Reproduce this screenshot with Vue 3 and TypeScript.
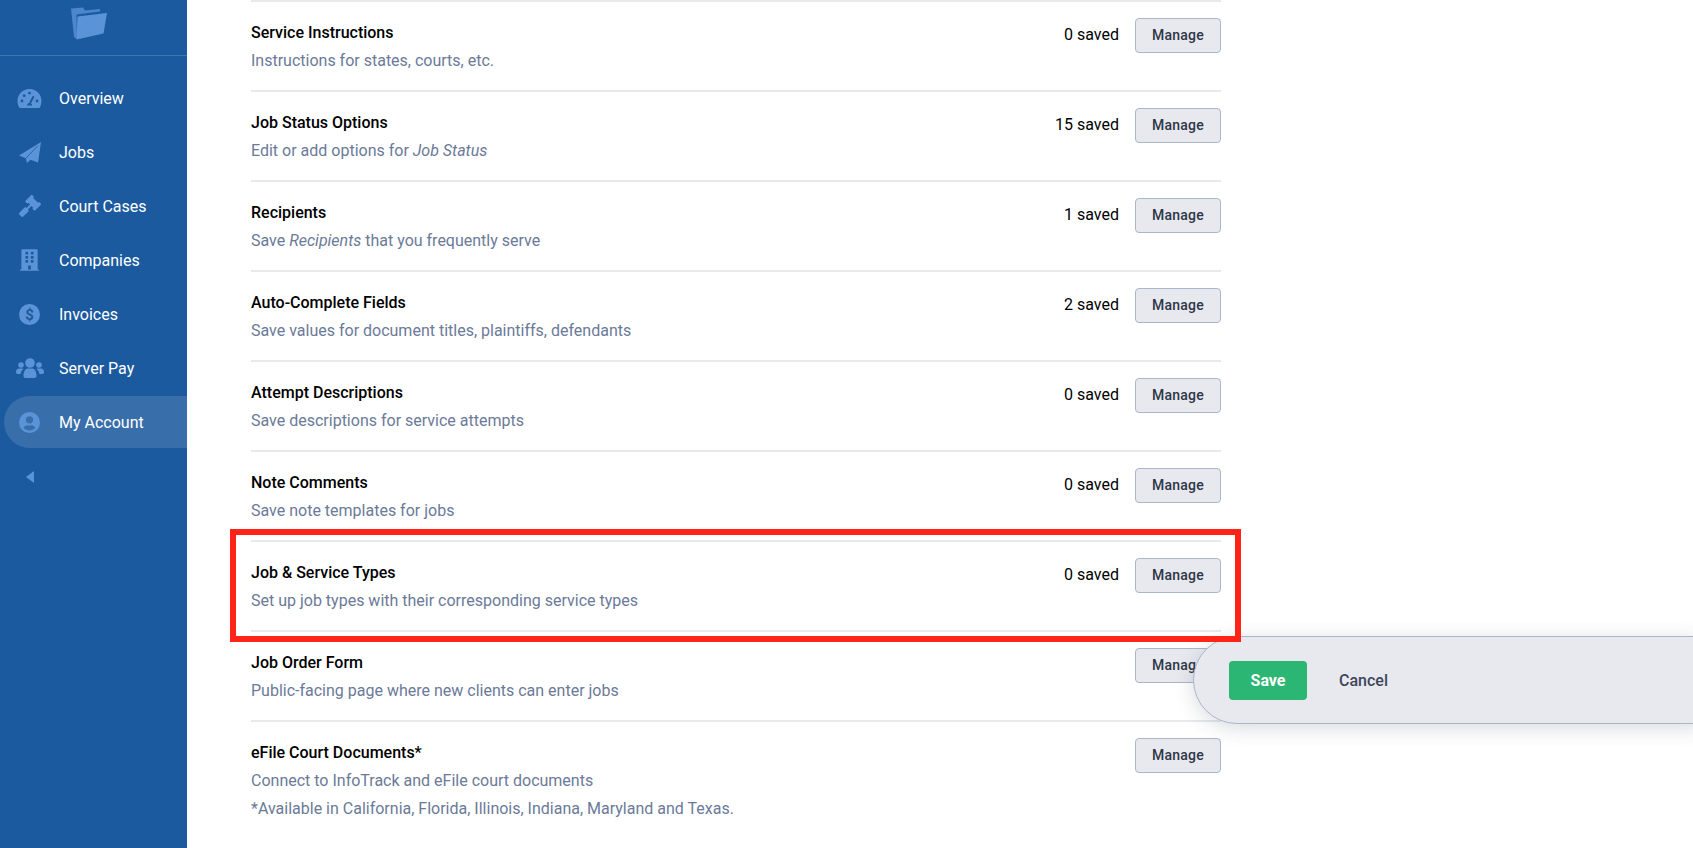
<script setup lang="ts">
interface Row { title: string; pre: string; em?: string; post?: string; extra?: string; saved?: string }
const rows: Row[] = [
  { title: 'Service Instructions', pre: 'Instructions for states, courts, etc.', saved: '0 saved' },
  { title: 'Job Status Options', pre: 'Edit or add options for ', em: 'Job Status', saved: '15 saved' },
  { title: 'Recipients', pre: 'Save ', em: 'Recipients', post: ' that you frequently serve', saved: '1 saved' },
  { title: 'Auto-Complete Fields', pre: 'Save values for document titles, plaintiffs, defendants', saved: '2 saved' },
  { title: 'Attempt Descriptions', pre: 'Save descriptions for service attempts', saved: '0 saved' },
  { title: 'Note Comments', pre: 'Save note templates for jobs', saved: '0 saved' },
  { title: 'Job & Service Types', pre: 'Set up job types with their corresponding service types', saved: '0 saved' },
  { title: 'Job Order Form', pre: 'Public-facing page where new clients can enter jobs' },
  { title: 'eFile Court Documents*', pre: 'Connect to InfoTrack and eFile court documents', extra: '*Available in California, Florida, Illinois, Indiana, Maryland and Texas.' },
]
</script>

<template>
  <div class="page">
    <aside class="sidebar">
      <div class="logo">
        <svg width="37" height="33" viewBox="0 0 37 33">
          <path class="ico dim" d="M0 1.500 L12 .5 L14 3.500 L29 2 L29 4.500 L5.500 7.500 L6 32 L3 30 Z" />
          <path class="ico" d="M6.500 9.500 L36 6 L32.500 26.500 L5.500 32.500 Z" />
        </svg>
      </div>
      <nav class="nav">
        <a class="item">
          <span class="icon">
            <svg width="25" height="21" viewBox="0 0 25 21"><path class="ico" fill-rule="evenodd" d="M12.500 1C5.800 1 .5 6.400.5 13c0 2.300.6 4.500 1.700 6.400.3.500.8.600 1.300.600h18c.5 0 1-.1 1.300-.6 1.100-1.900 1.700-4.100 1.700-6.400 0-6.600-5.300-12-12-12zM12.500 3.700a1.400 1.400 0 1 1 0 2.800 1.400 1.400 0 0 1 0-2.800zM5 14.400a1.400 1.400 0 1 1 0-2.800 1.400 1.400 0 0 1 0 2.800zm2.200-5.300a1.400 1.400 0 1 1 0-2.800 1.400 1.400 0 0 1 0 2.800zM15 17.500h-5c-.2-1.300.7-2.400 2-2.600l3.300-6.400c.3-.5.900-.7 1.300-.4.500.2.700.8.500 1.300l-3.200 6.200c.8.400 1.300 1.100 1.100 1.900zM20 14.400a1.400 1.400 0 1 1 0-2.800 1.400 1.400 0 0 1 0 2.800z" /></svg>
          </span>
          <span>Overview</span>
        </a>
        <a class="item">
          <span class="icon">
            <svg width="22" height="21" viewBox="0 0 22 21">
              <path class="ico" d="M22 0 L0 13.500 L6.800 16.300 L8 21 L11.500 17.800 L19 20.500 Z" />
              <path class="slit" d="M19 3.500 L6.800 16.300" />
            </svg>
          </span>
          <span>Jobs</span>
        </a>
        <a class="item">
          <span class="icon">
            <svg width="22" height="22" viewBox="0 0 512 512"><path class="ico" d="M505 199.400l-22.700-22.700c-9.300-9.300-24.500-9.300-33.900 0l-5.700 5.700L329.600 69.300l5.700-5.700c9.300-9.400 9.300-24.600 0-33.900L312.600 7c-9.300-9.400-24.500-9.400-33.900 0L154.200 131.500c-9.300 9.400-9.300 24.600 0 33.900l22.700 22.600c9.300 9.400 24.500 9.400 33.900 0l5.700-5.600 39.600 39.600-81 81-5.700-5.700c-12.500-12.500-32.800-12.500-45.300 0L9.400 412.100c-12.500 12.500-12.500 32.800 0 45.300l45.200 45.200c12.500 12.500 32.800 12.500 45.300 0l114.700-114.700c12.500-12.500 12.500-32.800 0-45.300l-5.700-5.600 81-81 39.700 39.600-5.700 5.700c-9.400 9.300-9.400 24.500 0 33.900l22.600 22.600c9.400 9.400 24.600 9.400 34 0L505 233.300c9.300-9.300 9.300-24.500 0-33.900z" /></svg>
          </span>
          <span>Court Cases</span>
        </a>
        <a class="item">
          <span class="icon">
            <svg width="19" height="22" viewBox="0 0 448 512"><path class="ico" d="M436 480h-20V24c0-13.300-10.700-24-24-24H56C42.700 0 32 10.700 32 24v456H12c-6.600 0-12 5.400-12 12v20h448v-20c0-6.600-5.400-12-12-12zM128 76c0-6.600 5.400-12 12-12h40c6.600 0 12 5.400 12 12v40c0 6.600-5.400 12-12 12h-40c-6.600 0-12-5.400-12-12V76zm0 96c0-6.600 5.400-12 12-12h40c6.600 0 12 5.400 12 12v40c0 6.600-5.400 12-12 12h-40c-6.600 0-12-5.400-12-12v-40zm52 148h-40c-6.600 0-12-5.400-12-12v-40c0-6.600 5.400-12 12-12h40c6.600 0 12 5.400 12 12v40c0 6.600-5.400 12-12 12zm76 160h-64v-84c0-6.600 5.400-12 12-12h40c6.600 0 12 5.400 12 12v84zm64-172c0 6.600-5.400 12-12 12h-40c-6.600 0-12-5.400-12-12v-40c0-6.600 5.400-12 12-12h40c6.600 0 12 5.400 12 12v40zm0-96c0 6.600-5.400 12-12 12h-40c-6.600 0-12-5.400-12-12v-40c0-6.600 5.400-12 12-12h40c6.600 0 12 5.400 12 12v40zm0-96c0 6.600-5.400 12-12 12h-40c-6.600 0-12-5.400-12-12V76c0-6.600 5.400-12 12-12h40c6.600 0 12 5.400 12 12v40z" /></svg>
          </span>
          <span>Companies</span>
        </a>
        <a class="item">
          <span class="icon">
            <svg width="21" height="21" viewBox="0 0 21 21">
              <circle class="ico" cx="10.500" cy="10.500" r="10.500" />
              <text class="dollar" x="10.500" y="16" text-anchor="middle">$</text>
            </svg>
          </span>
          <span>Invoices</span>
        </a>
        <a class="item">
          <span class="icon">
            <svg width="28" height="20" viewBox="0 0 28 20">
              <circle class="ico" cx="14" cy="5" r="4.800" />
              <path class="ico" d="M7.500 18c0-4.500 2-7.500 4-7.500h5c2 0 4 3 4 7.500 0 1-.8 2-2 2h-9c-1.200 0-2-1-2-2z" />
              <circle class="ico" cx="5" cy="7" r="2.800" />
              <circle class="ico" cx="23" cy="7" r="2.800" />
              <path class="ico" d="M0 14c0-2.200 1.200-3.500 3-3.500h3c.6 0 1.100.2 1.500.5-1.700 1.200-2.800 3.200-3 5H1.500C.6 16 0 15.200 0 14zM28 14c0-2.200-1.200-3.500-3-3.500h-3c-.6 0-1.100.2-1.500.5 1.700 1.200 2.800 3.200 3 5h3c.9 0 1.500-.8 1.500-1.500z" />
            </svg>
          </span>
          <span>Server Pay</span>
        </a>
        <a class="item active">
          <span class="icon">
            <svg width="21" height="21" viewBox="0 0 21 21">
              <path class="ico" fill-rule="evenodd" d="M10.500 0a10.500 10.500 0 1 0 0 21 10.500 10.500 0 0 0 0-21zM10.500 4.200a3.600 3.600 0 1 1 0 7.200 3.600 3.600 0 0 1 0-7.200zM10.500 18.400c-2.300 0-4.400-1-5.900-2.700.8-1.500 2.300-2.500 4-2.500.2 0 .4 0 .6.100.4.200.8.300 1.300.3s.9-.1 1.300-.3c.2-.1.400-.1.600-.1 1.700 0 3.200 1 4 2.500-1.500 1.700-3.600 2.700-5.900 2.700z" />
            </svg>
          </span>
          <span>My Account</span>
        </a>
        <div class="collapse"><span class="tri"></span></div>
      </nav>
    </aside>

    <main class="main">
      <section class="list">
        <div v-for="r in rows" :key="r.title" class="row">
          <div class="text">
            <div class="title">{{ r.title }}</div>
            <div class="desc">{{ r.pre }}<em v-if="r.em">{{ r.em }}</em>{{ r.post }}</div>
            <div v-if="r.extra" class="desc">{{ r.extra }}</div>
          </div>
          <div class="side">
            <span v-if="r.saved" class="saved">{{ r.saved }}</span>
            <button class="manage" type="button">Manage</button>
          </div>
        </div>
      </section>
    </main>

    <div class="savebar">
      <button class="save" type="button">Save</button>
      <button class="cancel" type="button">Cancel</button>
    </div>
    <div class="highlight"></div>
  </div>
</template>

<style>
html, body { margin: 0; overflow: hidden; background: #fff; }
</style>

<style scoped>
.page {
  position: relative;
  display: flex;
  width: 1693px;
  height: 848px;
  overflow: hidden;
  font-family: Roboto, "Liberation Sans", sans-serif;
  background: #fff;
}
.sidebar {
  flex: 0 0 187px;
  background: #1b5a9e;
  color: #fff;
}
.logo {
  height: 56px;
  box-sizing: border-box;
  border-bottom: 1px solid rgba(255, 255, 255, 0.17);
  padding: 7px 0 0 71px;
}
.logo svg { display: block; }
.ico { fill: #5b93d8; }
.ico.dim { fill: #4c86cc; }
.slit { fill: none; stroke: #1b5a9e; stroke-width: 0.8; }
.dollar { fill: #1b5a9e; font: 700 15px Roboto, sans-serif; }
.nav {
  display: flex;
  flex-direction: column;
  padding: 15px 0 0 4px;
}
.item {
  display: flex;
  align-items: center;
  height: 52px;
  margin: 1px 0;
  font-size: 16px;
  font-weight: 400;
  border-radius: 26px 0 0 26px;
}
.item.active { background: rgba(255, 255, 255, 0.13); }
.icon {
  flex: 0 0 55px;
  display: flex;
  justify-content: center;
  padding-right: 4px;
  box-sizing: border-box;
}
.icon svg { display: block; }
.collapse {
  display: flex;
  padding: 22px 0 0 22px;
}
.tri {
  width: 0;
  height: 0;
  border-top: 6px solid transparent;
  border-bottom: 6px solid transparent;
  border-right: 8px solid #5b93d8;
}
.main {
  flex: 1;
  padding-left: 64px;
}
.list {
  width: 970px;
}
.row {
  display: flex;
  justify-content: space-between;
  align-items: flex-start;
  height: 90px;
  box-sizing: border-box;
  border-top: 2px solid #e8e9ef;
  padding-top: 17px;
}
.title {
  font-size: 16px;
  font-weight: 500;
  line-height: 28px;
  color: #000;
}
.desc {
  font-size: 16px;
  line-height: 28px;
  color: #6b7a99;
}
.side {
  display: flex;
  align-items: flex-start;
  gap: 16px;
  margin-top: -1px;
}
.saved {
  font-size: 16px;
  line-height: 34px;
  color: #000;
}
.manage {
  width: 86px;
  height: 35px;
  padding: 0 0 2px;
  border: 1px solid #a9b6cc;
  border-radius: 4px;
  background: #e8e9ef;
  color: #2d3648;
  font: 500 14px Roboto, sans-serif;
  letter-spacing: 0.2px;
}
.savebar {
  position: absolute;
  left: 1193px;
  top: 636px;
  right: -10px;
  height: 88px;
  box-sizing: border-box;
  display: flex;
  align-items: center;
  gap: 32px;
  padding-left: 35px;
  background: #e8e9ef;
  border: 1px solid #a9b6cc;
  border-radius: 44px 0 0 44px;
  box-shadow: 0 4px 20px rgba(45, 54, 72, 0.18);
}
.save {
  width: 78px;
  height: 39px;
  border: 0;
  border-radius: 4px;
  background: #2cb673;
  color: #fff;
  font: 700 16px Roboto, sans-serif;
}
.cancel {
  border: 0;
  padding: 0;
  background: none;
  color: #3d4659;
  font: 500 16px Roboto, sans-serif;
}
.highlight {
  position: absolute;
  left: 230px;
  top: 529px;
  width: 1011px;
  height: 113px;
  box-sizing: border-box;
  border: 6px solid #ff2318;
  pointer-events: none;
}
</style>
